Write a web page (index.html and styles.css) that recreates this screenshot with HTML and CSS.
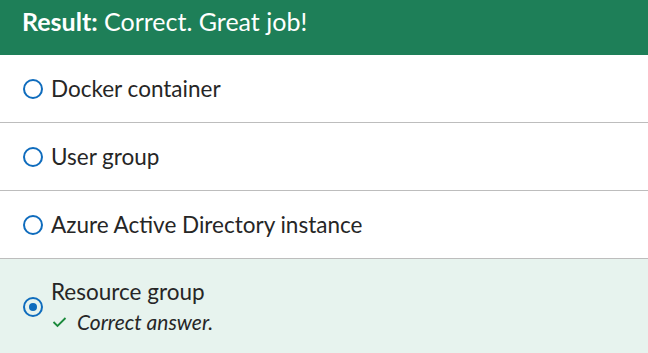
FILE: index.html
```html
<!DOCTYPE html>
<html lang="en">
<head>
  <meta charset="UTF-8">
  <title>Result</title>
  <link rel="stylesheet" href="styles.css">
</head>
<body>
<div id="quiz">
  <div class="result"><b>Result:</b> Correct. Great job!</div>
  <div class="choice">
    <span class="radio"></span>
    <div class="label">Docker container</div>
  </div>
  <div class="choice">
    <span class="radio"></span>
    <div class="label">User group</div>
  </div>
  <div class="choice">
    <span class="radio"></span>
    <div class="label">Azure Active Directory instance</div>
  </div>
  <div class="choice correct">
    <span class="radio checked"></span>
    <div class="label">
      Resource group
      <div class="feedback">
        <svg width="15" height="12" viewBox="0 0 15 12"><path d="M1.5 6 L5.5 10 L13.5 2" fill="none" stroke="#1b8a3c" stroke-width="1.8"/></svg>
        <i>Correct answer.</i>
      </div>
    </div>
  </div>
</div>
</body>
</html>
```

FILE: styles.css
```css
body {
  font-family: Lato, 'Open Sans', sans-serif;
  margin: 0;
  background: #fff;
  color: #262626;
}
.result {
  background-color: #1e7f58;
  color: #fff;
  font-size: 25px;
  height: 55px;
  line-height: 43px;
  padding: 0 22px;
}
.choice {
  display: flex;
  align-items: center;
  gap: 8px;
  padding: 20px 23px;
  border-bottom: 1px solid #bdbdbd;
  font-size: 22.5px;
  line-height: 27px;
}
.correct {
  background-color: #e7f3ee;
  border-bottom: none;
  padding-top: 19px;
  padding-bottom: 18px;
}
.radio {
  width: 16px;
  height: 16px;
  border: 2px solid #0f6cbd;
  border-radius: 50%;
  flex-shrink: 0;
  position: relative;
}
.checked::after {
  content: '';
  position: absolute;
  left: 4px;
  top: 4px;
  width: 8px;
  height: 8px;
  border-radius: 50%;
  background: #0f6cbd;
}
.feedback {
  font-size: 21px;
  line-height: 27px;
  margin-top: 3px;
  display: flex;
  align-items: center;
  gap: 10px;
}
.feedback svg {
  margin-left: 1px;
}
```
